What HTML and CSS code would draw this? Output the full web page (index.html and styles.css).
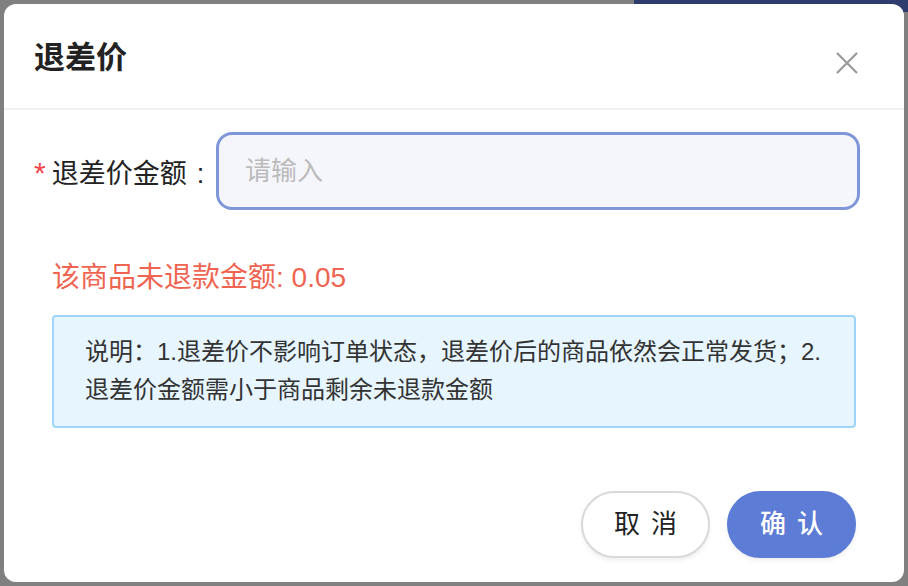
FILE: index.html
```html
<!DOCTYPE html>
<html lang="zh-CN">
<head>
    <meta charset="UTF-8">
    <meta name="viewport" content="width=device-width, initial-scale=1.0">
    <title>退差价</title>
    <link rel="stylesheet" href="styles.css">
</head>
<body>
    <!-- 遮罩下面露出来的页面顶部 -->
    <div class="page-bar"></div>
    <div class="dialog">
        <div class="dialog-header">
            <h2 class="dialog-title">退差价</h2>
            <a href="javascript:;" class="dialog-close">
                <svg width="22" height="22" viewBox="0 0 22 22">
                    <path d="M1 1 L21 21 M21 1 L1 21" stroke="#999" stroke-width="2.2" fill="none"/>
                </svg>
            </a>
        </div>
        <div class="dialog-body">
            <div class="form-row">
                <label class="form-label"><span class="required">*</span>退差价金额<span class="colon">:</span></label>
                <input class="form-input" type="text" placeholder="请输入">
            </div>
            <p class="refund-left">该商品未退款金额: 0.05</p>
            <div class="notice">
                说明：1.退差价不影响订单状态，退差价后的商品依然会正常发货；2.退差价金额需小于商品剩余未退款金额
            </div>
        </div>
        <div class="dialog-footer">
            <a href="javascript:;" class="btn btn-cancel">取&nbsp;消</a>
            <a href="javascript:;" class="btn btn-ok">确&nbsp;认</a>
        </div>
    </div>
</body>
</html>
```

FILE: styles.css
```css
* {
    margin: 0;
    padding: 0;
    box-sizing: border-box;
}
body {
    width: 908px;
    height: 586px;
    overflow: hidden;
    background-color: #808080;
    font-family: "Liberation Sans", "Noto Sans CJK SC", sans-serif;
    color: #333;
}
.page-bar {
    position: absolute;
    top: 0;
    left: 634px;
    width: 274px;
    height: 12px;
    background-color: #2f3d6e;
}
.dialog {
    position: relative;
    display: flex;
    flex-direction: column;
    margin: 4px;
    width: 900px;
    height: 578px;
    background-color: #fff;
    border-radius: 12px;
}
.dialog-header {
    display: flex;
    align-items: center;
    justify-content: space-between;
    height: 106px;
    padding: 0 46px 0 30px;
    border-bottom: 2px solid #f1f1f5;
}
.dialog-title {
    font-size: 31px;
    font-weight: 700;
    color: #222;
    margin-top: -4px;
}
.dialog-close {
    display: block;
    width: 22px;
    height: 22px;
    margin-top: 14px;
}
.dialog-body {
    flex: 1;
    padding: 22px 44px 0 30px;
}
.form-row {
    display: flex;
    align-items: center;
}
.form-label {
    width: 182px;
    font-size: 27px;
    color: #222;
    white-space: nowrap;
}
.required {
    font-size: 30px;
    color: #f5454a;
    margin-right: 6px;
}
.colon {
    margin-left: 10px;
}
.form-input {
    flex: 1;
    height: 78px;
    padding: 0 26px;
    border: 3px solid #7f96d9;
    border-radius: 16px;
    background-color: #f5f6fb;
    font-family: inherit;
    font-size: 26px;
    outline: none;
}
.form-input::placeholder {
    color: #bbb;
}
.refund-left {
    margin: 48px 0 0 18px;
    font-size: 28px;
    line-height: 40px;
    color: #ef6450;
}
.notice {
    margin: 17px 4px 0 18px;
    padding: 16px 20px 17px 31px;
    border: 2px solid #9fd5f8;
    border-radius: 4px;
    background-color: #e6f5fe;
    font-size: 24px;
    line-height: 38px;
    color: #333;
}
.dialog-footer {
    display: flex;
    justify-content: flex-end;
    gap: 17px;
    padding: 0 48px 24px 0;
}
.btn {
    display: block;
    width: 129px;
    height: 67px;
    line-height: 63px;
    border-radius: 34px;
    text-align: center;
    text-decoration: none;
    font-size: 26px;
    word-spacing: 4px;
    box-shadow: 0 3px 4px rgba(0, 0, 0, 0.06);
}
.btn-cancel {
    border: 2px solid #d9d9d9;
    color: #222;
    background-color: #fff;
}
.btn-ok {
    border: 2px solid #5c7cd6;
    color: #fff;
    background-color: #5c7cd6;
    font-weight: 500;
}
```
